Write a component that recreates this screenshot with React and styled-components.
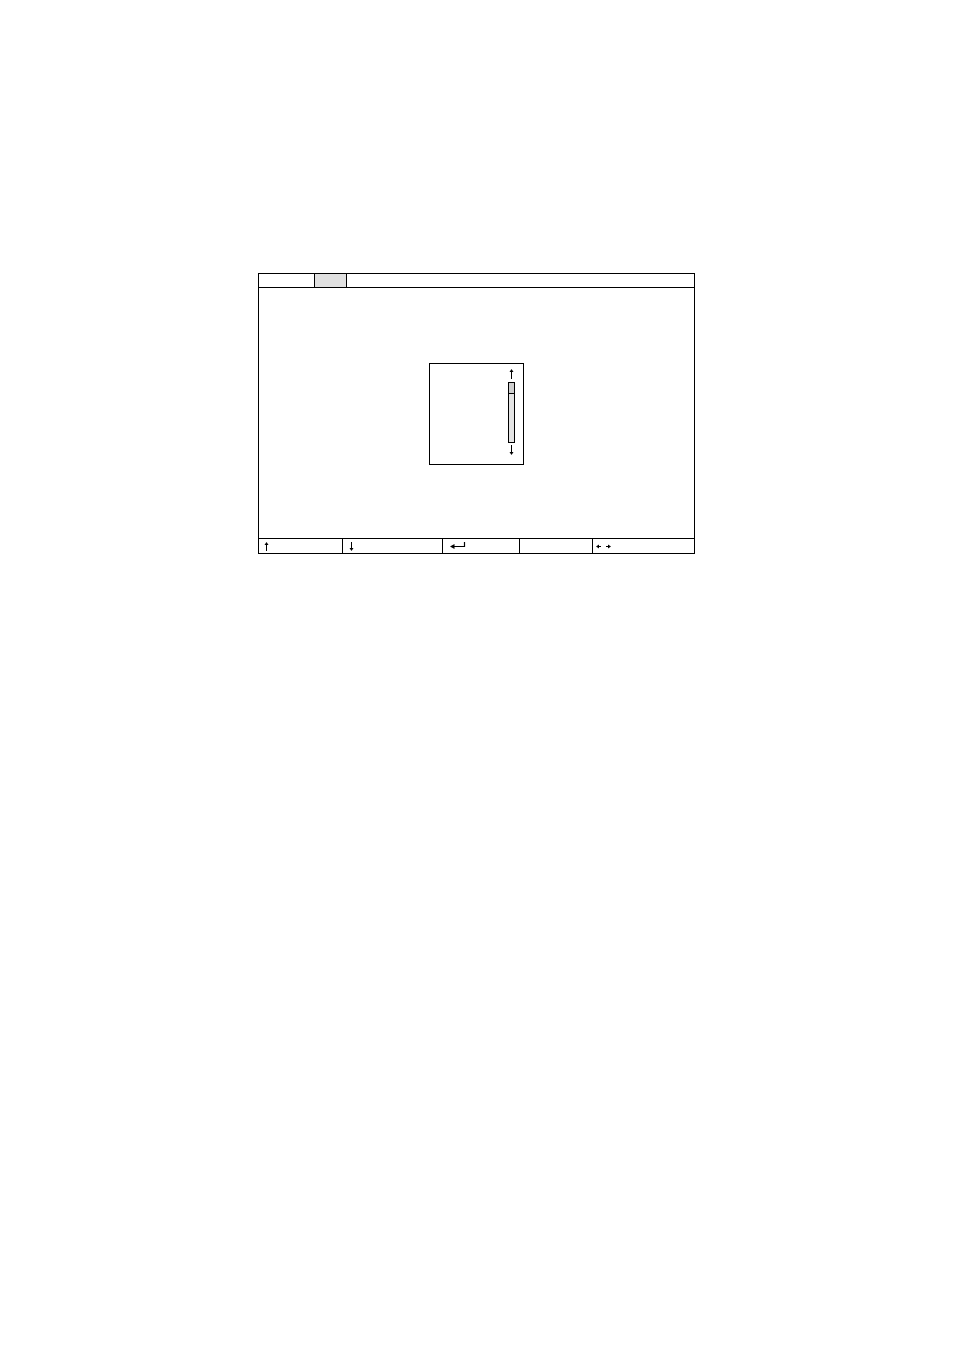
import React from 'react'
import styled, { createGlobalStyle } from 'styled-components'

const GlobalStyle = createGlobalStyle`
   html, body {
      margin: 0;
      padding: 0;
      background: #ffffff;
      font-family: "Liberation Sans", Arial, sans-serif;
   }
   * {
      box-sizing: border-box;
   }
`

const Page = styled.div`
   width: 954px;
   height: 1352px;
   padding: 273px 0 0 258px;
`

const Frame = styled.div`
   width: 437px;
   height: 281px;
   border: 1px solid #000;
   display: flex;
   flex-direction: column;
`

const TabBar = styled.div`
   display: flex;
   height: 14px;
   border-bottom: 1px solid #000;
`

const Tab = styled.div`
   width: ${(p) => p.$w}px;
   height: 100%;
   border-right: 1px solid #000;
   background: ${(p) => (p.$active ? '#e0e0e0' : '#fff')};
`

const Body = styled.div`
   flex: 1;
   display: flex;
   align-items: center;
   justify-content: center;
   padding-top: 2px;
`

const Dialog = styled.div`
   width: 95px;
   height: 102px;
   border: 1px solid #000;
   display: flex;
   justify-content: flex-end;
   padding: 5px 8px 0 0;
`

const ScrollColumn = styled.div`
   width: 7px;
   display: flex;
   flex-direction: column;
   align-items: center;
`

const Track = styled.div`
   width: 7px;
   height: 61px;
   margin: 3px 0 2px;
   border: 1px solid #000;
   background: #e4e4e4;
   display: flex;
   flex-direction: column;
`

const Thumb = styled.div`
   height: 11px;
   border-bottom: 1px solid #000;
   background: #cfcfcf;
`

const Footer = styled.div`
   display: flex;
   height: 15px;
   border-top: 1px solid #000;
`

const Key = styled.div`
   width: ${(p) => (p.$w ? `${p.$w}px` : 'auto')};
   flex: ${(p) => (p.$w ? 'none' : 1)};
   height: 100%;
   border-right: ${(p) => (p.$last ? 'none' : '1px solid #000')};
   display: flex;
   align-items: center;
   padding-left: ${(p) => p.$pad}px;
`

const UpArrow = ({ h = 10 }) => (
   <svg width="5" height={h} viewBox={`0 0 5 ${h}`}>
      <line x1="2.5" y1="2" x2="2.5" y2={h} stroke="#000" strokeWidth="1" />
      <polygon points="2.5,0 0.5,3 4.5,3" fill="#000" />
   </svg>
)

const DownArrow = ({ h = 10 }) => (
   <svg width="5" height={h} viewBox={`0 0 5 ${h}`}>
      <line x1="2.5" y1="0" x2="2.5" y2={h - 2} stroke="#000" strokeWidth="1" />
      <polygon points={`2.5,${h} 0.5,${h - 3} 4.5,${h - 3}`} fill="#000" />
   </svg>
)

const EnterArrow = () => (
   <svg width="16" height="8" viewBox="0 0 16 8" style={{ marginTop: -2 }}>
      <polyline points="3,5.5 14.5,5.5 14.5,1" fill="none" stroke="#000" strokeWidth="1.2" />
      <polygon points="0,5.5 4.5,3 4.5,8" fill="#000" />
   </svg>
)

const SideArrows = () => (
   <svg width="16" height="5" viewBox="0 0 16 5">
      <line x1="2" y1="2.5" x2="5" y2="2.5" stroke="#000" strokeWidth="1" />
      <polygon points="0,2.5 3,0.5 3,4.5" fill="#000" />
      <line x1="10" y1="2.5" x2="13" y2="2.5" stroke="#000" strokeWidth="1" />
      <polygon points="15,2.5 12,0.5 12,4.5" fill="#000" />
   </svg>
)

const App = () => {
   return (
      <Page>
         <GlobalStyle />
         <Frame>
            <TabBar>
               <Tab $w={56} />
               <Tab $w={32} $active />
            </TabBar>
            <Body>
               <Dialog>
                  <ScrollColumn>
                     <UpArrow />
                     <Track>
                        <Thumb />
                     </Track>
                     <DownArrow />
                  </ScrollColumn>
               </Dialog>
            </Body>
            <Footer>
               <Key $w={84} $pad={5}>
                  <UpArrow h={9} />
               </Key>
               <Key $w={100} $pad={6}>
                  <DownArrow h={9} />
               </Key>
               <Key $w={77} $pad={7}>
                  <EnterArrow />
               </Key>
               <Key $w={73} $pad={0} />
               <Key $last $pad={3}>
                  <SideArrows />
               </Key>
            </Footer>
         </Frame>
      </Page>
   )
}

export default App
